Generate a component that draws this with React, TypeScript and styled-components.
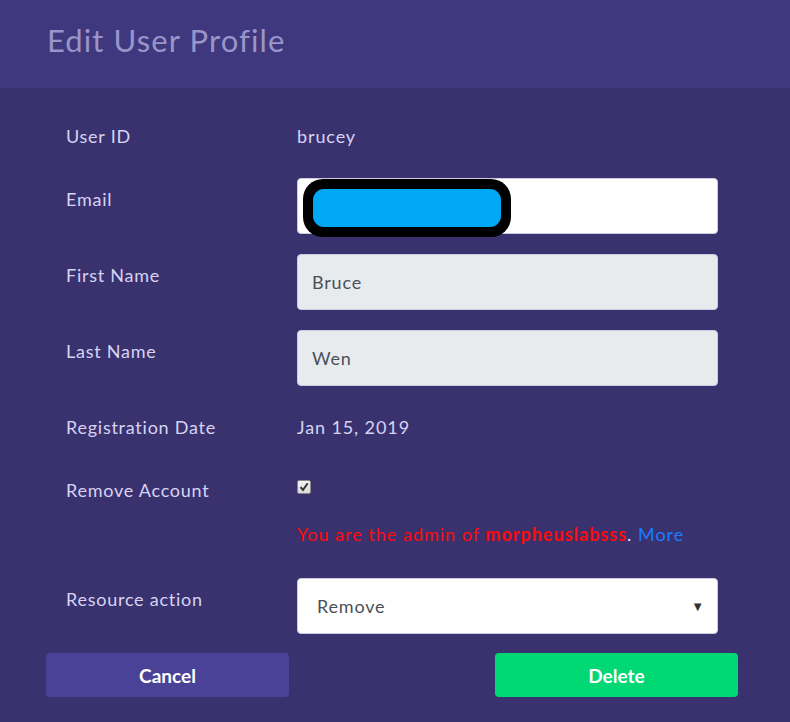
import React from "react";
import styled, { createGlobalStyle } from "styled-components";

const Global = createGlobalStyle`
  html, body { margin: 0; padding: 0; background: #39326f; }
  body { font-family: Lato, "Open Sans", sans-serif; }
  * { box-sizing: border-box; }
`;

const Page = styled.div`
  width: 790px;
  height: 722px;
  background: #39326f;
  display: flex;
  flex-direction: column;
  overflow: hidden;
`;

const Header = styled.header`
  height: 88px;
  background: #3f387e;
  display: flex;
  align-items: center;
  padding: 0 0 8px 47px;
`;

const Title = styled.h1`
  margin: 0;
  font-size: 31px;
  font-weight: 400;
  color: #9a95c8;
  letter-spacing: 1.1px;
`;

const Body = styled.div`
  padding: 27px 72px 0 66px;
  display: flex;
  flex-direction: column;
  gap: 20px;
`;

const Row = styled.div`
  display: grid;
  grid-template-columns: 231px 421px;
  align-items: start;
`;

const Label = styled.div`
  font-size: 18px;
  line-height: 27px;
  padding: 8px 0;
  color: #d7d3f3;
  letter-spacing: 0.75px;
`;

const Value = styled.div`
  font-size: 18px;
  line-height: 27px;
  padding: 8px 0;
  color: #d7d3f3;
  letter-spacing: 0.9px;
`;

const Field = styled.div<{ $disabled?: boolean }>`
  position: relative;
  height: 56px;
  border: 1px solid #c9cbe0;
  border-radius: 4px;
  background: ${(p) => (p.$disabled ? "#e8ebee" : "#ffffff")};
  color: #495057;
  font-size: 18px;
  letter-spacing: 0.8px;
  display: flex;
  align-items: center;
  padding: 0 14px;
`;

const SelectBox = styled(Field)`
  padding: 0 12px 0 19px;
  justify-content: space-between;
`;

const Arrow = styled.span`
  font-size: 13px;
  color: #333;
`;

const Redact = styled.span`
  position: absolute;
  left: 5px;
  top: 0px;
  width: 208px;
  height: 58px;
  background: #000;
  border-radius: 20px;
  padding: 10px;
  display: flex;
`;

const RedactFill = styled.span`
  flex: 1;
  background: #00a8f3;
  border-radius: 11px;
`;

const RemoveCol = styled.div`
  padding-top: 11px;
  display: flex;
  flex-direction: column;
`;

const Check = styled.span`
  width: 14px;
  height: 14px;
  border: 1px solid #8a8a8a;
  border-radius: 2px;
  background: linear-gradient(#f4f4f4, #d9d9d9);
  display: flex;
  align-items: center;
  justify-content: center;
`;

const Warning = styled.div`
  margin-top: 27px;
  padding-bottom: 10px;
  font-size: 18px;
  line-height: 27px;
  letter-spacing: 1px;
  color: #ff0a0a;
`;

const Strong = styled.b`
  font-weight: 700;
`;

const Dot = styled.span`
  color: #e8e6f5;
`;

const More = styled.a`
  color: #1a7cff;
  text-decoration: none;
`;

const Footer = styled.div`
  display: flex;
  justify-content: space-between;
  padding: 19px 52px 0 46px;
`;

const Button = styled.button<{ $variant: "cancel" | "delete" }>`
  width: 243px;
  height: 44px;
  border: none;
  border-radius: 4px;
  font-family: Lato, sans-serif;
  font-size: 19px;
  font-weight: 700;
  color: #fff;
  background: ${(p) => (p.$variant === "cancel" ? "#4a4297" : "#00d876")};
`;

export default function App() {
  return (
    <>
      <Global />
      <Page>
        <Header>
          <Title>Edit User Profile</Title>
        </Header>
        <Body>
          <Row>
            <Label>User ID</Label>
            <Value>brucey</Value>
          </Row>
          <Row>
            <Label>Email</Label>
            <Field>
              <Redact>
                <RedactFill />
              </Redact>
            </Field>
          </Row>
          <Row>
            <Label>First Name</Label>
            <Field $disabled>Bruce</Field>
          </Row>
          <Row>
            <Label>Last Name</Label>
            <Field $disabled>Wen</Field>
          </Row>
          <Row>
            <Label>Registration Date</Label>
            <Value>Jan 15, 2019</Value>
          </Row>
          <Row>
            <Label>Remove Account</Label>
            <RemoveCol>
              <Check>
                <svg width="10" height="10" viewBox="0 0 10 10">
                  <path d="M1.5 5.2 L4 8 L8.7 1.2" fill="none" stroke="#333" strokeWidth="2" />
                </svg>
              </Check>
              <Warning>
                You are the admin of <Strong>morpheuslabsss</Strong>
                <Dot>.</Dot> <More>More</More>
              </Warning>
            </RemoveCol>
          </Row>
          <Row>
            <Label>Resource action</Label>
            <SelectBox>
              <span>Remove</span>
              <Arrow>▼</Arrow>
            </SelectBox>
          </Row>
        </Body>
        <Footer>
          <Button $variant="cancel">Cancel</Button>
          <Button $variant="delete">Delete</Button>
        </Footer>
      </Page>
    </>
  );
}
